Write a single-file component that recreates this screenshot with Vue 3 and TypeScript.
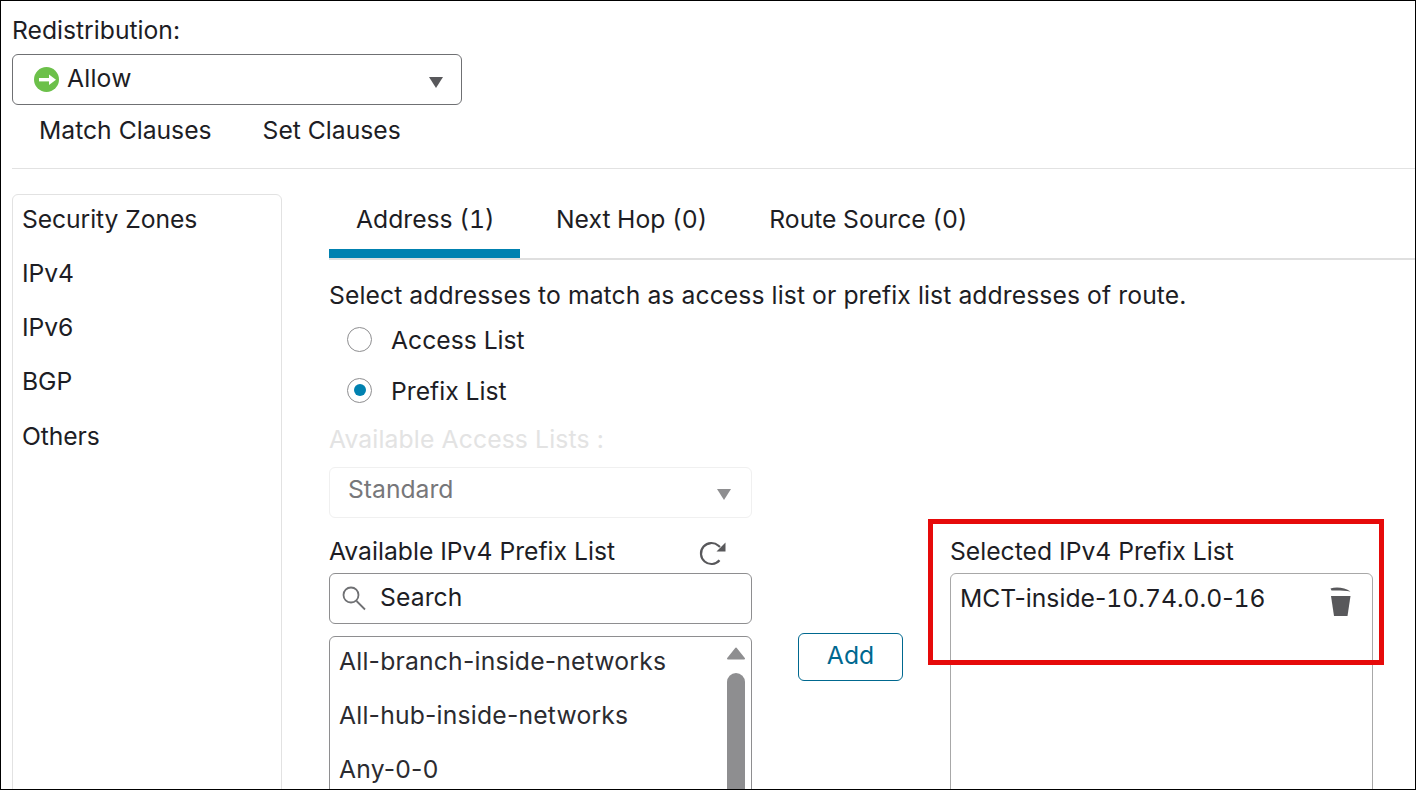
<template>
  <div class="page">
    <section class="head">
      <div class="head-label">Redistribution:</div>
      <div class="action-select">
        <svg class="allow-icon" width="25" height="25" viewBox="0 0 25 25">
          <circle cx="12.5" cy="12.5" r="12.5" fill="#6cc04a" />
          <path d="M5 12.7h11" stroke="#fff" stroke-width="3.4" />
          <path d="M15 7.5l7 5.2-7 5.2z" fill="#fff" />
        </svg>
        <span class="allow-text">Allow</span>
        <i class="caret"></i>
      </div>
      <div class="clauses">
        <span v-for="clause in clauses" :key="clause">{{ clause }}</span>
      </div>
    </section>

    <section class="body">
      <!-- left menu -->
      <aside class="side">
        <div v-for="item in sideItems" :key="item" class="side-item">{{ item }}</div>
      </aside>

      <div class="main">
        <div class="tabs">
          <div
            v-for="(tab, idx) in tabs"
            :key="tab"
            class="tab"
            :class="{ active: idx === 0 }"
          >{{ tab }}</div>
        </div>

        <div class="hint">Select addresses to match as access list or prefix list addresses of route.</div>

        <div class="radio-row">
          <span class="radio"></span>
          <span class="radio-text">Access List</span>
        </div>
        <div class="radio-row second">
          <span class="radio on"></span>
          <span class="radio-text">Prefix List</span>
        </div>

        <div class="disabled-label">Available Access Lists :</div>
        <div class="disabled-select">
          <span>Standard</span>
          <i class="caret light"></i>
        </div>

        <div class="lists">
          <div class="col">
            <div class="col-head">
              <span>Available IPv4 Prefix List</span>
              <svg class="refresh" width="28" height="28" viewBox="0 0 28 28" fill="none">
                <path d="M20.5 19.3A10.5 10.5 0 1 1 19.5 4.7L21 6" stroke="#58585b" stroke-width="2.2" />
                <path d="M26.5 1.5V10.5H17.5z" fill="#58585b" />
              </svg>
            </div>
            <div class="search">
              <svg width="24" height="26" viewBox="0 0 24 26" fill="none" stroke="#6f7073" stroke-width="1.8">
                <circle cx="9" cy="10" r="7.5" />
                <path d="M14.5 16L23 24.5" />
              </svg>
              <span class="search-text">Search</span>
            </div>
            <div class="avail-box">
              <div class="avail-items">
                <div v-for="name in available" :key="name" class="avail-item">{{ name }}</div>
              </div>
              <div class="scroll">
                <svg width="18" height="13" viewBox="0 0 18 13">
                  <path d="M9 1.5L17 11.5H1z" fill="#8e8e90" stroke="#8e8e90" stroke-width="2" stroke-linejoin="round" />
                </svg>
                <i class="scroll-thumb"></i>
              </div>
            </div>
          </div>

          <button class="add-btn">Add</button>

          <div class="col">
            <div class="col-head">
              <span>Selected IPv4 Prefix List</span>
            </div>
            <div class="selected-box">
              <span>MCT-inside-<span class="num">10.74.0.0</span>-<span class="num">16</span></span>
              <svg class="trash" width="22" height="30" viewBox="0 0 22 30">
                <path d="M0.5 1.5C6 -0.2 15 0.4 20.5 4.5C14 3.4 6 3.2 1.5 3.6z" fill="#58585b" />
                <path d="M1 9H20.5L17.5 29H4z" fill="#58585b" />
              </svg>
            </div>
          </div>
        </div>
      </div>
    </section>

    <!-- annotation drawn over the screenshot -->
    <div class="callout"></div>
  </div>
</template>

<script setup lang="ts">
const clauses = ['Match Clauses', 'Set Clauses']
const sideItems = ['Security Zones', 'IPv4', 'IPv6', 'BGP', 'Others']
const tabs = ['Address (1)', 'Next Hop (0)', 'Route Source (0)']
const available = ['All-branch-inside-networks', 'All-hub-inside-networks', 'Any-0-0']
</script>

<style>
html, body {
  margin: 0;
  background: #fff;
  overflow: hidden;
}
</style>

<style scoped>
.page {
  position: relative;
  box-sizing: border-box;
  width: 1416px;
  height: 790px;
  overflow: hidden;
  border: 1px solid #000;
  background: #fff;
  color: #1d1d24;
  font-family: Inter, "Liberation Sans", sans-serif;
  font-size: 24.7px;
  line-height: 30px;
}

.num {
  font-variant-numeric: tabular-nums;
}

.head {
  margin: 0 0 0 11px;
  height: 167px;
  border-bottom: 1px solid #e2e2e2;
}

.head-label {
  box-sizing: border-box;
  height: 53px;
  padding-top: 14px;
}

.action-select {
  display: flex;
  align-items: center;
  box-sizing: border-box;
  width: 450px;
  height: 51px;
  padding: 0 18px 0 21px;
  border: 1px solid #6f7073;
  border-radius: 6px;
}

.allow-icon {
  margin-right: 8px;
  flex: none;
}

.allow-text {
  padding-bottom: 4px;
  letter-spacing: 0.2px;
}

.caret {
  margin-left: auto;
  margin-top: 6px;
  width: 0;
  height: 0;
  border-left: 7.5px solid transparent;
  border-right: 7.5px solid transparent;
  border-top: 11px solid #58585b;
}

.caret.light {
  border-top-color: #8e8e90;
  margin-top: 12px;
}

.clauses {
  display: flex;
  gap: 51px;
  padding: 10px 0 0 27px;
}

.body {
  display: flex;
  padding: 25px 0 0 11px;
}

.side {
  box-sizing: border-box;
  flex: none;
  width: 270px;
  height: 640px;
  padding: 0 9px;
  border: 1px solid #e2e2e2;
  border-radius: 6px;
}

.side-item {
  height: 54.1px;
  line-height: 49px;
  letter-spacing: -0.08px;
}

.side-item:last-child {
  padding-top: 1px;
}

.main {
  flex: none;
  width: 1087px;
  margin-left: 47px;
}

.tabs {
  display: flex;
  box-sizing: border-box;
  height: 66px;
  border-bottom: 2px solid #dfdfdf;
  font-variant-numeric: tabular-nums;
}

.tab {
  box-sizing: border-box;
  height: 64px;
  margin-right: 8px;
  padding: 10px 27px 0 27px;
  white-space: nowrap;
}

.tab.active {
  width: 191px;
  margin-right: 9px;
  border-bottom: 9px solid #0081b0;
}

.hint {
  margin-top: 20px;
  letter-spacing: 0.09px;
}

.radio-row {
  display: flex;
  align-items: center;
  gap: 19px;
  height: 30px;
  margin: 14px 0 0 18px;
}

.radio-row.second {
  margin-top: 21px;
}

.radio-text {
  padding-top: 2px;
}

.radio {
  display: flex;
  align-items: center;
  justify-content: center;
  box-sizing: border-box;
  width: 25px;
  height: 25px;
  border: 1px solid #8e8e90;
  border-radius: 50%;
}

.radio.on::after {
  content: "";
  width: 12px;
  height: 12px;
  border-radius: 50%;
  background: #0081b0;
}

.disabled-label {
  margin-top: 19px;
  color: #e3e3e3;
  letter-spacing: 0.13px;
}

.disabled-select {
  display: flex;
  align-items: center;
  box-sizing: border-box;
  width: 423px;
  height: 51px;
  margin-top: 13px;
  padding: 0 20px 8px 18px;
  border: 1px solid #f0f0f0;
  border-radius: 6px;
  color: #77777a;
}

.lists {
  display: flex;
  align-items: flex-start;
  margin-top: 19px;
}

.col {
  flex: none;
  width: 423px;
}

.col-head {
  display: flex;
  justify-content: space-between;
  height: 36px;
  line-height: 28px;
}

.refresh {
  margin: 4px 25px 0 0;
}

.search {
  display: flex;
  align-items: center;
  gap: 14px;
  box-sizing: border-box;
  height: 51px;
  padding: 0 0 2px 12px;
  border: 1px solid #8e8e90;
  border-radius: 6px;
}

.search-text {
  padding-bottom: 2px;
  letter-spacing: 0.1px;
}

.avail-box {
  display: flex;
  justify-content: space-between;
  box-sizing: border-box;
  height: 200px;
  margin-top: 12px;
  padding: 0 6px 0 9px;
  border: 1px solid #8e8e90;
  border-radius: 6px;
  color: #2b2b30;
}

.avail-item {
  height: 54px;
  line-height: 48px;
  letter-spacing: 0.2px;
}

.scroll {
  display: flex;
  flex-direction: column;
  align-items: center;
  width: 18px;
  padding-top: 10px;
}

.scroll svg {
  flex: none;
}

.scroll-thumb {
  flex: none;
  width: 18px;
  height: 200px;
  margin-top: 13px;
  border-radius: 9px;
  background: #8e8e90;
}

.add-btn {
  flex: none;
  box-sizing: border-box;
  width: 105px;
  height: 48px;
  margin: 96px 47px 0 46px;
  padding: 0 0 4px;
  border: 1px solid #00688f;
  border-radius: 6px;
  background: #fff;
  color: #00688f;
  font: inherit;
}

.selected-box {
  display: flex;
  justify-content: space-between;
  box-sizing: border-box;
  height: 240px;
  padding: 9px 20px 0 9px;
  border: 1px solid #a8a8a8;
  border-radius: 6px;
}

.trash {
  margin-top: 4px;
}

.callout {
  position: absolute;
  left: 927px;
  top: 518px;
  width: 456px;
  height: 146px;
  box-sizing: border-box;
  border: 5px solid #e60a0a;
}
</style>
